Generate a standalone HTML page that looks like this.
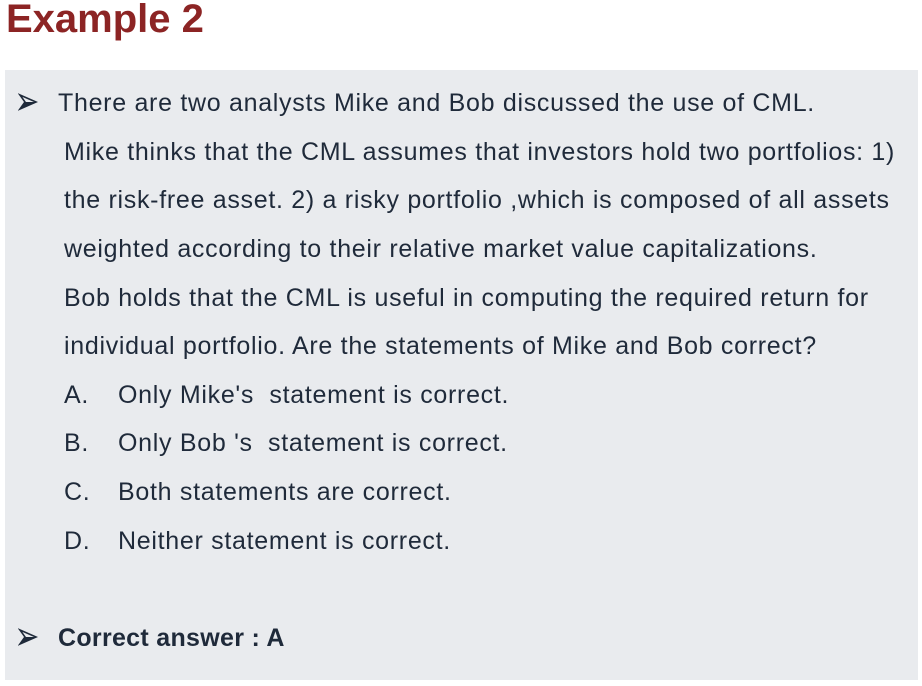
<!DOCTYPE html>
<html><head><style>
body{margin:0;width:922px;height:686px;background:#fff;overflow:hidden;font-family:"Liberation Sans",sans-serif;color:#1f2a3a;}
h1{position:absolute;left:6px;top:-3px;margin:0;font-size:40px;font-weight:bold;color:#8c2424;}
.box{position:absolute;left:5px;top:70px;width:913px;height:610px;background:#e9ebee;}
.l{position:absolute;font-size:25px;letter-spacing:0.7px;white-space:nowrap;line-height:30px;}
.arr{position:absolute;width:20px;height:20px;}
</style></head><body>
<h1>Example 2</h1>
<div class="box"></div>
<svg class="arr" style="left:18px;top:92px" viewBox="0 0 20 20"><path d="M2 3 L18 10 L2 17 L7 10 Z" fill="none" stroke="#1f2a3a" stroke-width="1.6"/><path d="M2 17 L18 10 L7 10Z" fill="#1f2a3a"/></svg>
<div class="l" style="left:58px;top:88px">There are two analysts Mike and Bob discussed the use of CML.</div>
<div class="l" style="left:64px;top:137px">Mike thinks that the CML assumes that investors hold two portfolios: 1)</div>
<div class="l" style="left:64px;top:185px">the risk-free asset. 2) a risky portfolio ,which is composed of all assets</div>
<div class="l" style="left:64px;top:234px">weighted according to their relative market value capitalizations.</div>
<div class="l" style="left:64px;top:283px">Bob holds that the CML is useful in computing the required return for</div>
<div class="l" style="left:64px;top:331px">individual portfolio. Are the statements of Mike and Bob correct?</div>
<div class="l" style="left:64px;top:380px">A.</div><div class="l" style="left:118px;top:380px">Only Mike's&nbsp; statement is correct.</div>
<div class="l" style="left:64px;top:428px">B.</div><div class="l" style="left:118px;top:428px">Only Bob 's&nbsp; statement is correct.</div>
<div class="l" style="left:64px;top:477px">C.</div><div class="l" style="left:118px;top:477px">Both statements are correct.</div>
<div class="l" style="left:64px;top:526px">D.</div><div class="l" style="left:118px;top:526px">Neither statement is correct.</div>
<svg class="arr" style="left:18px;top:627px" viewBox="0 0 20 20"><path d="M2 3 L18 10 L2 17 L7 10 Z" fill="none" stroke="#1f2a3a" stroke-width="1.6"/><path d="M2 17 L18 10 L7 10Z" fill="#1f2a3a"/></svg>
<div class="l" style="left:58px;top:623px;font-weight:bold;letter-spacing:0.3px">Correct answer : A</div>
</body></html>
